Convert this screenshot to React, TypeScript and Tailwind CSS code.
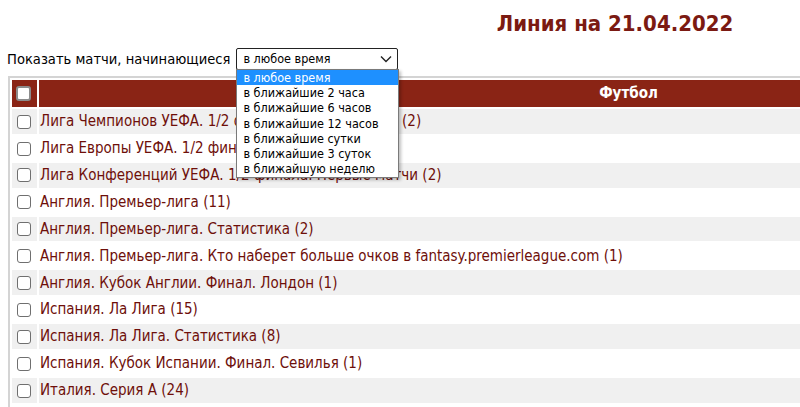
import React from "react";

const LEAGUES = [
  "Лига Чемпионов УЕФА. 1/2 финала. Первые матчи (2)",
  "Лига Европы УЕФА. 1/2 финала. Первые матчи (2)",
  "Лига Конференций УЕФА. 1/2 финала. Первые матчи (2)",
  "Англия. Премьер-лига (11)",
  "Англия. Премьер-лига. Статистика (2)",
  "Англия. Премьер-лига. Кто наберет больше очков в fantasy.premierleague.com (1)",
  "Англия. Кубок Англии. Финал. Лондон (1)",
  "Испания. Ла Лига (15)",
  "Испания. Ла Лига. Статистика (8)",
  "Испания. Кубок Испании. Финал. Севилья (1)",
  "Италия. Серия А (24)",
  "Италия. Серия А. Статистика (6)",
];

const TIMES = [
  "в любое время",
  "в ближайшие 2 часа",
  "в ближайшие 6 часов",
  "в ближайшие 12 часов",
  "в ближайшие сутки",
  "в ближайшие 3 суток",
  "в ближайшую неделю",
];

function Box({ header = false }: { header?: boolean }) {
  return (
    <span
      className={`inline-block rounded-[3px] bg-white align-middle ${
        header ? "h-[15px] w-[15px] border-2 border-[#8c8c8c]" : "h-[14px] w-[14px] border border-[#6f6f6f]"
      }`}
    />
  );
}

export default function App() {
  return (
    <div className="h-[407px] w-full overflow-hidden bg-white">
      <div
        className="w-[1230px]"
        style={{ fontFamily: '"DejaVu Sans Condensed", "DejaVu Sans", sans-serif' }}
      >
        {/* Title */}
        <h1 className="pt-[11px] text-center text-[22px] font-bold leading-[26px] text-[#7b1a12]">
          Линия на 21.04.2022
        </h1>

        {/* Filter */}
        <div className="mt-[11px] flex h-[22px] items-center pl-[7px] text-black">
          <span className="text-[14.6px] leading-[22px]">Показать матчи, начинающиеся</span>
          <div className="relative ml-[6px]">
            <div className="flex h-[22px] w-[162px] items-center justify-between rounded-[2px] border border-[#222] bg-white pl-[6px] pr-[5px] text-[12.5px]">
              <span className="leading-[20px]">в любое время</span>
              <svg width="12" height="8" viewBox="0 0 12 8" fill="none">
                <path d="M1 1.5l5 5 5-5" stroke="#222" strokeWidth="1.4" />
              </svg>
            </div>
            <div className="absolute left-0 top-[21px] z-10 w-[163px] border border-[#7a7a7a] bg-white pb-[1px] text-[12.5px] shadow-[2px_2px_3px_rgba(0,0,0,0.25)]">
              {TIMES.map((t, i) => (
                <div
                  key={t}
                  className={`h-[15.2px] whitespace-nowrap pl-[6px] leading-[15px] ${
                    i === 0 ? "bg-[#1e90ff] text-white" : "text-black"
                  }`}
                >
                  {t}
                </div>
              ))}
            </div>
          </div>
        </div>

        {/* Table */}
        <table className="ml-[8px] mt-[6px] w-[1214px] border-separate border-spacing-[2px] border-2 border-[#d4d4d4] text-[15px]">
          <thead>
            <tr className="h-[27px] bg-[#8a2415]">
              <th className="w-[25px] pl-[4px] text-left">
                <Box header />
              </th>
              <th className="text-center font-bold text-white">Футбол</th>
            </tr>
          </thead>
          <tbody>
            {LEAGUES.map((l, i) => (
              <tr key={l} className={`h-[24.9px] ${i % 2 === 0 ? "bg-[#f0f0f0]" : "bg-white"}`}>
                <td className="pl-[5px]">
                  <Box />
                </td>
                <td className="pl-[1px] text-[#6e0f0a]">{l}</td>
              </tr>
            ))}
          </tbody>
        </table>
      </div>
    </div>
  );
}
